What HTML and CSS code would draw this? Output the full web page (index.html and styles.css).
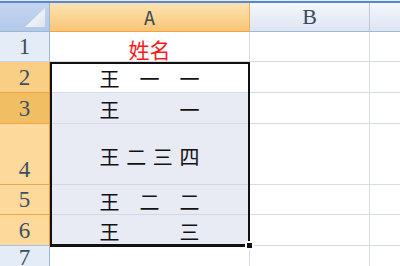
FILE: index.html
```html
<!DOCTYPE html>
<html>
<head>
<meta charset="utf-8">
<link rel="stylesheet" href="styles.css">
</head>
<body>
<div class="topline"></div>
<div class="sheet">
  <div class="corner"><div class="tri"></div></div>
  <div class="colh colh-sel">A</div>
  <div class="colh">B</div>
  <div class="colh colh-last"></div>

  <div class="rowh">1</div>
  <div class="cell cell-title">姓名</div>
  <div class="cell"></div>
  <div class="cell cell-last"></div>

  <div class="rowh rowh-sel rowh-2">2</div>
  <div class="cell cell-active"><div class="name"><span>王</span><span>一</span><span>一</span></div></div>
  <div class="cell"></div>
  <div class="cell cell-last"></div>

  <div class="rowh rowh-sel rowh-3">3</div>
  <div class="cell cell-sel"><div class="name"><span>王</span><span>一</span></div></div>
  <div class="cell"></div>
  <div class="cell cell-last"></div>

  <div class="rowh rowh-sel">4</div>
  <div class="cell cell-sel cell-mid"><div class="name"><span>王</span><span>二</span><span>三</span><span>四</span></div></div>
  <div class="cell"></div>
  <div class="cell cell-last"></div>

  <div class="rowh rowh-sel">5</div>
  <div class="cell cell-sel"><div class="name"><span>王</span><span>二</span><span>二</span></div></div>
  <div class="cell"></div>
  <div class="cell cell-last"></div>

  <div class="rowh rowh-sel rowh-6">6</div>
  <div class="cell cell-sel"><div class="name"><span>王</span><span>三</span></div></div>
  <div class="cell"></div>
  <div class="cell cell-last"></div>

  <div class="rowh rowh-7">7</div>
  <div class="cell"></div>
  <div class="cell"></div>
  <div class="cell cell-last"></div>

  <div class="selection"><div class="handle"></div></div>
</div>
</body>
</html>
```

FILE: styles.css
```css
* { box-sizing: border-box; }
html, body {
  margin: 0;
  padding: 0;
  width: 400px;
  height: 266px;
  overflow: hidden;
  background: #ffffff;
}
.topline {
  height: 3px;
  border-top: 1px solid #e3eaf5;
  background: #5a87d2;
}
.sheet {
  position: relative;
  display: grid;
  grid-template-columns: 50px 200px 120px 1fr;
  grid-template-rows: 29px 30px 31px 31px 61px 30px 31px 1fr;
  height: 263px;
  font-family: "Liberation Serif", serif;
}
.corner {
  position: relative;
  background: linear-gradient(#c4d5ef, #b3c9ea);
  border-right: 1px solid #9eb6ce;
  border-bottom: 1px solid #9eb6ce;
}
.tri {
  position: absolute;
  right: 4px;
  bottom: 4px;
  width: 20px;
  height: 19px;
  background: linear-gradient(135deg, #ffffff, #dfe4ec);
  clip-path: polygon(100% 0, 100% 100%, 0 100%);
}
.colh {
  display: flex;
  align-items: flex-end;
  justify-content: center;
  padding-bottom: 3px;
  font-size: 22px;
  line-height: 1;
  color: #3a4b60;
  background: linear-gradient(#f4f7fc, #dce5f2);
  border-right: 1px solid #b8c9df;
  border-bottom: 1px solid #9fb7d3;
}
.colh-sel {
  background: linear-gradient(#fde3b2, #f7c676);
  border-right: 1px solid #f1b257;
  border-bottom: 1px solid #f0a444;
  font-family: "DejaVu Sans Mono", monospace;
  font-size: 19px;
  color: #3f4a55;
}
.colh-last { border-right: none; }
.rowh {
  display: flex;
  align-items: flex-end;
  justify-content: center;
  padding-bottom: 3px;
  font-size: 23px;
  line-height: 1;
  color: #3c4e63;
  background: #e4ecf7;
  border-right: 1px solid #9eb6ce;
  border-bottom: 1px solid #c5d3e6;
}
.rowh-sel {
  background: #fdd99c;
  border-right: 1px solid #e39c3a;
  border-bottom: 1px solid #f1a648;
}
.rowh-2 { background: #f9cf86; }
.rowh-3 { background: #f1be63; }
.rowh-6 { border-bottom: 1px solid #a9bfd9; }
.rowh-7 { border-bottom: none; }
.cell {
  display: flex;
  align-items: center;
  justify-content: center;
  padding-top: 4px;
  background: #ffffff;
  border-right: 1px solid #d5dce8;
  border-bottom: 1px solid #d5dce8;
  font-family: "Noto Sans CJK SC", sans-serif;
  font-size: 20px;
  line-height: 1;
  color: #111111;
}
.cell-last { border-right: none; }
.cell-title {
  color: #ff1a1a;
  font-size: 21px;
  padding-top: 6px;
}
.cell-sel { background: #e8eaf4; border-bottom-color: #d4d8e6; }
.cell-mid { padding-top: 6px; }
.name {
  width: 100px;
  display: flex;
  justify-content: space-between;
}
.selection {
  position: absolute;
  grid-column: 2 / 3;
  grid-row: 3 / 8;
  top: 0;
  left: 0;
  right: 0;
  bottom: -1px;
  border: 2px solid #111111;
  border-bottom-width: 3px;
}
.handle {
  position: absolute;
  right: -5px;
  bottom: -5px;
  width: 7px;
  height: 7px;
  background: #111111;
  border: 1px solid #ffffff;
  box-shadow: 0 0 0 1px #ffffff;
}
```
